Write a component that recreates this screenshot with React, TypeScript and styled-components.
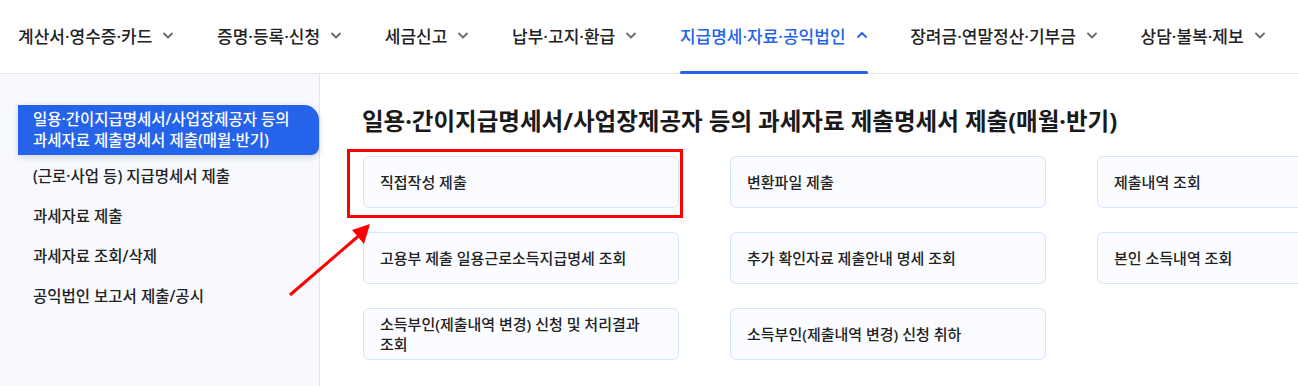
import styled, { createGlobalStyle } from "styled-components";

const GlobalStyle = createGlobalStyle`
  html, body {
    margin: 0;
    padding: 0;
    background: #ffffff;
    overflow: hidden;
  }
  body {
    font-family: "Noto Sans", "Noto Sans CJK KR", sans-serif;
    color: #222222;
  }
`;

const navItems = [
  "계산서·영수증·카드",
  "증명·등록·신청",
  "세금신고",
  "납부·고지·환급",
  "지급명세·자료·공익법인",
  "장려금·연말정산·기부금",
  "상담·불복·제보",
];

const sideItems = [
  "(근로·사업 등) 지급명세서 제출",
  "과세자료 제출",
  "과세자료 조회/삭제",
  "공익법인 보고서 제출/공시",
];

const cards = [
  "직접작성 제출",
  "변환파일 제출",
  "제출내역 조회",
  "고용부 제출 일용근로소득지급명세 조회",
  "추가 확인자료 제출안내 명세 조회",
  "본인 소득내역 조회",
  "소득부인(제출내역 변경) 신청 및 처리결과 조회",
  "소득부인(제출내역 변경) 신청 취하",
];

function Chevron({ up }: { up?: boolean }) {
  return (
    <svg width="12" height="12" viewBox="0 0 12 12" fill="none">
      <path
        d={up ? "M2 8 L6 4 L10 8" : "M2 4.5 L6 8.5 L10 4.5"}
        stroke="currentColor"
        strokeWidth="1.8"
        strokeLinecap="round"
        strokeLinejoin="round"
      />
    </svg>
  );
}

export default function App() {
  return (
    <Page>
      <GlobalStyle />
      <TopNav>
        {navItems.map((item, i) => (
          <NavItem key={item} $active={i === 4}>
            <span>{item}</span>
            <Chevron up={i === 4} />
          </NavItem>
        ))}
      </TopNav>
      <Body>
        <Sidebar>
          <ActiveSide>
            일용·간이지급명세서/사업장제공자 등의
            <br />
            과세자료 제출명세서 제출(매월·반기)
          </ActiveSide>
          {sideItems.map((s) => (
            <SideItem key={s}>{s}</SideItem>
          ))}
        </Sidebar>
        <Main>
          <Title>일용·간이지급명세서/사업장제공자 등의 과세자료 제출명세서 제출(매월·반기)</Title>
          <CardGrid>
            {cards.map((c) => (
              <Card key={c}>{c}</Card>
            ))}
          </CardGrid>
          <Highlight />
          <Arrow width="90" height="80" viewBox="0 0 90 80">
            <line x1="4" y1="75" x2="76" y2="13" stroke="#ff0000" strokeWidth="3" />
            <polygon points="84,4 66,10 78,24" fill="#ff0000" />
          </Arrow>
        </Main>
      </Body>
    </Page>
  );
}

const Page = styled.div`
  width: 1298px;
  height: 386px;
  overflow: hidden;
  display: flex;
  flex-direction: column;
`;

const TopNav = styled.nav`
  display: flex;
  align-items: stretch;
  gap: 42.7px;
  height: 73px;
  padding-left: 18px;
  border-bottom: 1px solid #e6e6e6;
  flex-shrink: 0;
`;

const NavItem = styled.div<{ $active?: boolean }>`
  position: relative;
  display: flex;
  align-items: center;
  gap: 10px;
  padding-bottom: 3px;
  font-size: 17px;
  font-weight: 500;
  white-space: nowrap;
  color: ${(p) => (p.$active ? "#2563eb" : "#222222")};

  svg {
    color: ${(p) => (p.$active ? "#2563eb" : "#666a73")};
  }

  &::after {
    content: "";
    display: ${(p) => (p.$active ? "block" : "none")};
    position: absolute;
    left: 0;
    right: 0;
    bottom: -1px;
    height: 3px;
    border-radius: 2px;
    background: #2563eb;
  }
`;

const Body = styled.div`
  display: flex;
  flex: 1;
`;

const Sidebar = styled.aside`
  width: 320px;
  flex-shrink: 0;
  background: #f7f9fe;
  border-right: 1px solid #dbe6fb;
  padding-top: 31px;
  box-sizing: border-box;
`;

const ActiveSide = styled.div`
  margin-left: 18px;
  height: 50px;
  box-sizing: border-box;
  padding: 4px 0 0 15px;
  background: #2563eb;
  color: #ffffff;
  font-size: 15.5px;
  font-weight: 500;
  line-height: 21px;
  border-radius: 0 15px 8px 0;
  box-shadow: 0 2px 6px rgba(20, 40, 90, 0.18);
  white-space: nowrap;
`;

const SideItem = styled.div`
  height: 40px;
  display: flex;
  align-items: center;
  padding-left: 33px;
  font-size: 15.5px;
  font-weight: 500;
  color: #222222;
`;

const Main = styled.main`
  position: relative;
  flex: 1;
  padding: 31px 0 0 42px;
`;

const Title = styled.h2`
  margin: 0 0 19px;
  font-size: 23.5px;
  font-weight: 700;
  line-height: 32px;
  color: #1a1a1a;
  white-space: nowrap;
`;

const CardGrid = styled.div`
  display: grid;
  grid-template-columns: repeat(3, 316px);
  grid-auto-rows: 52px;
  column-gap: 51px;
  row-gap: 24px;
  margin-left: 1px;
`;

const Card = styled.div`
  display: flex;
  align-items: center;
  padding: 0 16px;
  box-sizing: border-box;
  background: #fafcff;
  border: 1px solid #d6e4fb;
  border-radius: 6px;
  font-size: 15px;
  font-weight: 500;
  line-height: 20px;
  color: #222222;
  word-break: keep-all;
`;

const Highlight = styled.div`
  position: absolute;
  left: 27px;
  top: 75px;
  width: 336px;
  height: 69px;
  box-sizing: border-box;
  border: 3px solid #ff0000;
  pointer-events: none;
`;

const Arrow = styled.svg`
  position: absolute;
  left: -34px;
  top: 146px;
`;
